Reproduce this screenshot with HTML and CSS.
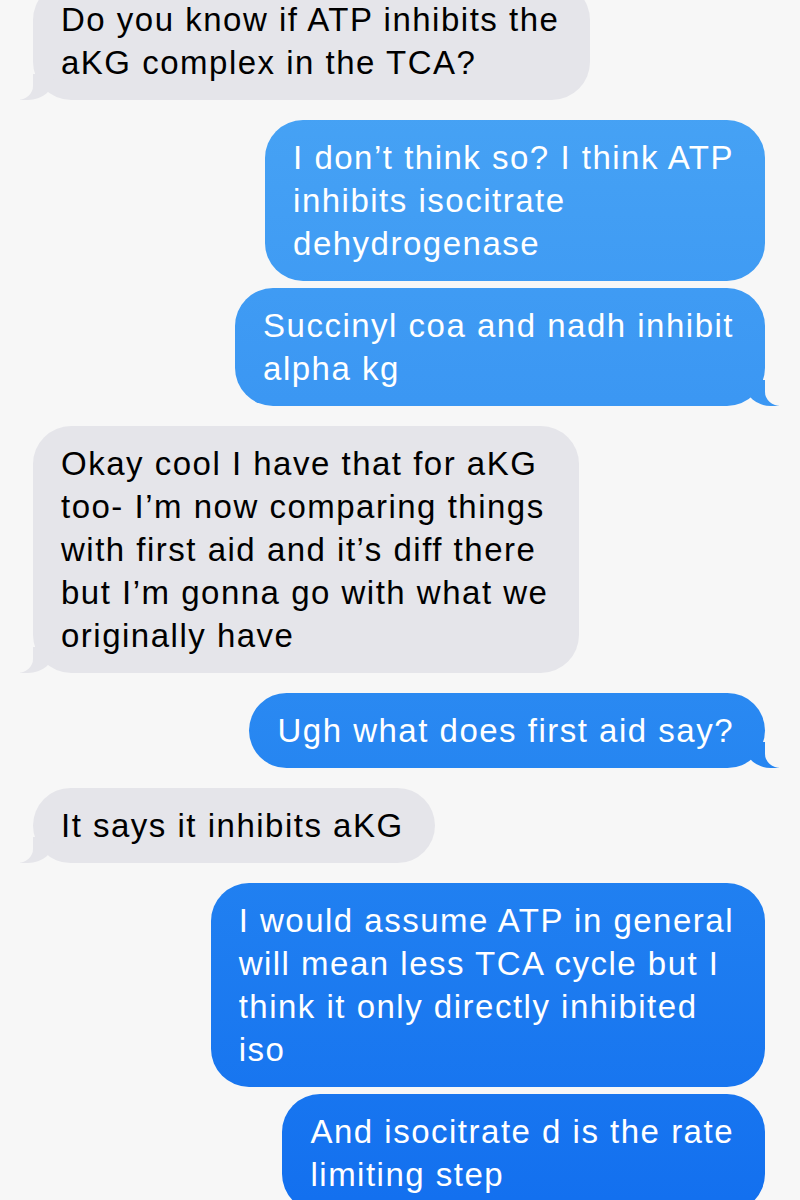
FILE: index.html
```html
<!DOCTYPE html>
<html lang="en">
<head>
<meta charset="utf-8">
<title>Messages</title>
<link rel="stylesheet" href="styles.css">
</head>
<body>
<main class="thread">
  <div class="msg recv tail">Do you know if ATP inhibits the<br>aKG complex in the TCA?</div>
  <div class="msg sent">I don’t think so? I think ATP<br>inhibits isocitrate<br>dehydrogenase</div>
  <div class="msg sent tail">Succinyl coa and nadh inhibit<br>alpha kg</div>
  <div class="msg recv tail">Okay cool I have that for aKG<br>too- I’m now comparing things<br>with first aid and it’s diff there<br>but I’m gonna go with what we<br>originally have</div>
  <div class="msg sent tail">Ugh what does first aid say?</div>
  <div class="msg recv tail">It says it inhibits aKG</div>
  <div class="msg sent">I would assume ATP in general<br>will mean less TCA cycle but I<br>think it only directly inhibited<br>iso</div>
  <div class="msg sent">And isocitrate d is the rate<br>limiting step</div>
</main>
</body>
</html>
```

FILE: styles.css
```css
html, body {
  margin: 0;
  padding: 0;
  background: #f7f7f7;
  height: 1200px;
  overflow: hidden;
}

.thread {
  display: flex;
  flex-direction: column;
  margin-top: -25px;
  padding: 0 35px 0 33px;
  font-family: "Liberation Sans", Arial, sans-serif;
  font-size: 33px;
  line-height: 43px;
  letter-spacing: 1.5px;
}

.msg {
  position: relative;
  padding: 16px 31px 16px 28px;
  border-radius: 38px;
  white-space: nowrap;
  margin-top: 7px;
}

.msg.recv {
  align-self: flex-start;
  background: #e5e5ea;
  color: #000;
}

.msg.sent {
  align-self: flex-end;
  color: #fff;
  background: linear-gradient(#4aa6f5 0, #3b97f3 400px, #2484f1 800px, #1370ef 1200px) fixed;
}

.msg.tail + .msg {
  margin-top: 20px;
}

.msg.tail::before,
.msg.tail::after {
  content: "";
  position: absolute;
  bottom: 0;
  height: 26px;
}

.msg.sent.tail::before {
  right: -14px;
  width: 34px;
  background: linear-gradient(#4aa6f5 0, #3b97f3 400px, #2484f1 800px, #1370ef 1200px) fixed;
  border-bottom-left-radius: 26px 22px;
}

.msg.sent.tail::after {
  right: -26px;
  width: 26px;
  background: #f7f7f7;
  border-bottom-left-radius: 16px 14px;
}

.msg.recv.tail::before {
  left: -13px;
  width: 34px;
  background: #e5e5ea;
  border-bottom-right-radius: 26px 22px;
}

.msg.recv.tail::after {
  left: -26px;
  width: 26px;
  background: #f7f7f7;
  border-bottom-right-radius: 16px 14px;
}
```
